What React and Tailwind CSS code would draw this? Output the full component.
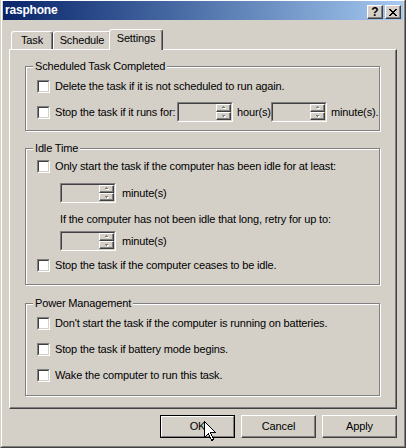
import React from "react";

function Check() {
  return (
    <div className="w-[13px] h-[13px] shrink-0 border border-t-[#808080] border-l-[#808080] border-r-white border-b-white">
      <div className="w-full h-full border border-t-[#404040] border-l-[#404040] border-r-[#D4D0C8] border-b-[#D4D0C8] bg-white" />
    </div>
  );
}

function CheckRow({ children, className = "" }) {
  return (
    <div className={`flex items-center h-[13px] ${className}`}>
      <Check />
      <span className="ml-[5px] whitespace-nowrap">{children}</span>
    </div>
  );
}

function Arrow({ up }) {
  return (
    <svg width="6" height="4" viewBox="0 0 6 4" shapeRendering="crispEdges">
      {up ? (
        <>
          <rect x="3" y="1" width="1" height="1" fill="#fff" />
          <rect x="2" y="2" width="3" height="1" fill="#fff" />
          <rect x="2" y="0" width="1" height="1" fill="#808080" />
          <rect x="1" y="1" width="3" height="1" fill="#808080" />
        </>
      ) : (
        <>
          <rect x="2" y="2" width="3" height="1" fill="#fff" />
          <rect x="3" y="3" width="1" height="1" fill="#fff" />
          <rect x="1" y="1" width="3" height="1" fill="#808080" />
          <rect x="2" y="2" width="1" height="1" fill="#808080" />
        </>
      )}
    </svg>
  );
}

function SpinBtn({ up }) {
  return (
    <div className="h-[8px] flex items-center justify-center border border-t-white border-l-white border-r-[#404040] border-b-[#404040] shadow-[inset_-1px_-1px_0_#808080] bg-[#D4D0C8]">
      <Arrow up={up} />
    </div>
  );
}

function Spin() {
  return (
    <div className="w-[56px] h-[20px] shrink-0 flex border border-t-[#808080] border-l-[#808080] border-r-white border-b-white">
      <div className="flex-1 flex border border-t-[#404040] border-l-[#404040] border-r-[#D4D0C8] border-b-[#D4D0C8] bg-[#D4D0C8]">
        <div className="flex-1" />
        <div className="w-[15px] flex flex-col">
          <SpinBtn up />
          <SpinBtn />
        </div>
      </div>
    </div>
  );
}

function Group({ title, className = "", children }) {
  return (
    <div
      className={`relative w-[355px] ml-[15px] border border-[#808080] shadow-[inset_1px_1px_0_#fff,1px_1px_0_#fff] ${className}`}
    >
      <span className="absolute left-[7px] top-[-7px] px-[2px] bg-[#D4D0C8] whitespace-nowrap">
        {title}
      </span>
      {children}
    </div>
  );
}

function Tab({ w, children }) {
  return (
    <div
      className={`${w} h-[18px] flex justify-center pt-[2px] border-l border-t border-r border-l-white border-t-white border-r-[#404040] shadow-[inset_-1px_0_0_#808080] rounded-t-[3px]`}
    >
      {children}
    </div>
  );
}

function Btn({ children, def }) {
  if (def) {
    return (
      <div className="w-[75px] h-[23px] border border-black">
        <div className="h-full flex items-center justify-center border border-t-white border-l-white border-r-[#808080] border-b-[#808080]">
          {children}
        </div>
      </div>
    );
  }
  return (
    <div className="w-[75px] h-[23px] flex items-center justify-center border border-t-white border-l-white border-r-[#404040] border-b-[#404040] shadow-[inset_-1px_-1px_0_#808080]">
      {children}
    </div>
  );
}

export default function App() {
  return (
    <div className="relative w-[406px] h-[448px] bg-[#D4D0C8] border-l border-r border-b border-l-[#D4D0C8] border-r-[#404040] border-b-[#404040] font-['Liberation_Sans',Arial,sans-serif] text-[11px] leading-[13px] text-black tracking-[-0.15px] select-none">
      <div className="h-full flex flex-col border border-l-white border-t-white border-r-[#808080] border-b-[#808080] pl-px pr-px pb-px">
        {/* Title bar */}
        <div className="h-[19px] shrink-0 flex items-start bg-linear-to-r from-[#0A246A] to-[#A6CAF0] pl-[2px] pr-[2px]">
          <span className="mt-[3px] font-bold text-white text-[12px] leading-[13px] tracking-[-0.2px]">rasphone</span>
          <div className="ml-auto mt-[4px] flex gap-[2px]">
            <div className="w-[16px] h-[14px] flex items-center justify-center border border-t-white border-l-white border-r-[#404040] border-b-[#404040] shadow-[inset_-1px_-1px_0_#808080] bg-[#D4D0C8]">
              <span className="font-bold text-[12px] leading-[12px] tracking-normal">?</span>
            </div>
            <div className="w-[16px] h-[14px] flex items-center justify-center border border-t-white border-l-white border-r-[#404040] border-b-[#404040] shadow-[inset_-1px_-1px_0_#808080] bg-[#D4D0C8]">
              <svg width="8" height="7" viewBox="0 0 8 7" shapeRendering="crispEdges" fill="#000">
                <rect x="0" y="0" width="2" height="1" />
                <rect x="6" y="0" width="2" height="1" />
                <rect x="1" y="1" width="2" height="1" />
                <rect x="5" y="1" width="2" height="1" />
                <rect x="2" y="2" width="4" height="1" />
                <rect x="3" y="3" width="2" height="1" />
                <rect x="2" y="4" width="4" height="1" />
                <rect x="1" y="5" width="2" height="1" />
                <rect x="5" y="5" width="2" height="1" />
                <rect x="0" y="6" width="2" height="1" />
                <rect x="6" y="6" width="2" height="1" />
              </svg>
            </div>
          </div>
        </div>

        {/* Content */}
        <div className="flex-1 flex flex-col px-[6px] pt-[9px]">
          {/* Tabs */}
          <div className="h-[20px] flex items-end pl-[2px]">
            <Tab w="w-[42px]">Task</Tab>
            <Tab w="w-[58px]">Schedule</Tab>
            <div className="relative z-10 w-[54px] h-[21px] -mb-px -ml-[2px] flex justify-center pt-[2px] border-l border-t border-r border-l-white border-t-white border-r-[#404040] shadow-[inset_-1px_0_0_#808080] rounded-t-[3px] bg-[#D4D0C8]">
              Settings
            </div>
          </div>

          {/* Panel */}
          <div className="h-[360px] flex flex-col border border-l-white border-t-white border-r-[#404040] border-b-[#404040] shadow-[inset_-1px_-1px_0_#808080] pt-[16px]">
            <Group title="Scheduled Task Completed" className="pt-[13px] pl-[11px] pb-[8px]">
              <CheckRow>Delete the task if it is not scheduled to run again.</CheckRow>
              <div className="mt-[9px] h-[20px] flex items-center">
                <Check />
                <span className="ml-[5px] w-[122px] shrink-0 whitespace-nowrap">Stop the task if it runs for:</span>
                <Spin />
                <span className="ml-[4px] w-[34px] shrink-0 whitespace-nowrap">hour(s)</span>
                <Spin />
                <span className="ml-[4px] whitespace-nowrap">minute(s).</span>
              </div>
            </Group>

            <Group title="Idle Time" className="mt-[17px] pt-[11px] pl-[11px] pb-[12px]">
              <CheckRow>Only start the task if the computer has been idle for at least:</CheckRow>
              <div className="mt-[10px] ml-[23px] h-[20px] flex items-center">
                <Spin />
                <span className="ml-[6px]">minute(s)</span>
              </div>
              <div className="mt-[10px] ml-[23px] h-[13px] whitespace-nowrap">
                If the computer has not been idle that long, retry for up to:
              </div>
              <div className="mt-[5px] ml-[23px] h-[20px] flex items-center">
                <Spin />
                <span className="ml-[6px]">minute(s)</span>
              </div>
              <CheckRow className="mt-[8px]">Stop the task if the computer ceases to be idle.</CheckRow>
            </Group>

            <Group title="Power Management" className="mt-[18px] pt-[13px] pl-[11px] pb-[13px]">
              <CheckRow>Don't start the task if the computer is running on batteries.</CheckRow>
              <CheckRow className="mt-[13px]">Stop the task if battery mode begins.</CheckRow>
              <CheckRow className="mt-[13px]">Wake the computer to run this task.</CheckRow>
            </Group>
          </div>

          {/* Buttons */}
          <div className="mt-[6px] flex justify-end gap-[6px]">
            <Btn def>OK</Btn>
            <Btn>Cancel</Btn>
            <Btn>Apply</Btn>
          </div>
        </div>
      </div>

      {/* Mouse cursor */}
      <svg
        className="absolute left-[203px] top-[421px] pointer-events-none"
        width="13"
        height="22"
        viewBox="0 0 13 22"
        shapeRendering="crispEdges"
      >
        <path
          d="M0.5 0.5 L0.5 16.5 L4.5 12.5 L7.5 19.5 L9.5 18.5 L6.5 11.5 L11.5 11.5 Z"
          fill="#fff"
          stroke="#000"
          strokeWidth="1"
        />
      </svg>
    </div>
  );
}
